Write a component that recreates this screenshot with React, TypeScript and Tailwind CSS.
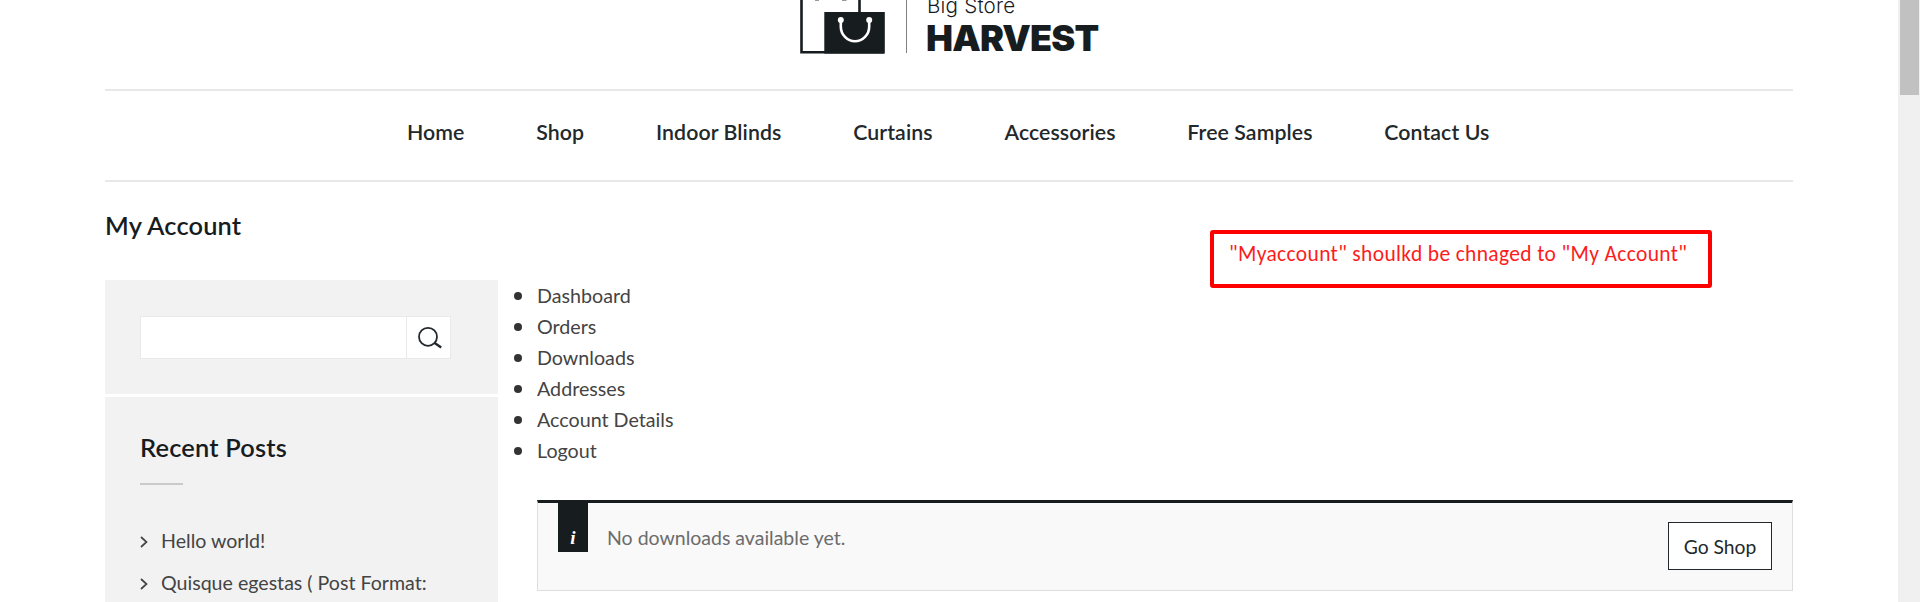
import React from "react";

const navItems = ["Home", "Shop", "Indoor Blinds", "Curtains", "Accessories", "Free Samples", "Contact Us"];
const accountLinks = ["Dashboard", "Orders", "Downloads", "Addresses", "Account Details", "Logout"];
const recentPosts = ["Hello world!", "Quisque egestas ( Post Format:"];

function BagLogo() {
  return (
    <svg width="86" height="54" viewBox="0 0 86 54" fill="none" className="shrink-0">
      <path d="M1.5 0V52.3H84" stroke="#171c1f" strokeWidth="2.6" />
      <path d="M59.5 0V13" stroke="#171c1f" strokeWidth="2.6" />
      <rect x="24.3" y="12" width="60.5" height="41.6" fill="#171c1f" />
      <path d="M15 0H19M42 0H46.5" stroke="#75787a" strokeWidth="1.6" />
      <path d="M40.8 20V26.5a14.2 14.8 0 0 0 28.4 0V20" stroke="#fff" strokeWidth="2.6" />
      <circle cx="40.8" cy="20" r="3" fill="#fff" />
      <circle cx="69.2" cy="20" r="3" fill="#fff" />
    </svg>
  );
}

function Header() {
  return (
    <header className="flex h-[89px] items-start pl-[695px]">
      <BagLogo />
      <div className="ml-[20px] h-[53px] w-px bg-[#7d8183]" />
      <div className="ml-[20px] flex h-[60px] flex-col justify-end text-[#171c1f]">
        <div className="font-['Inter',sans-serif] text-[20.6px] leading-6 font-light tracking-[0.2px]">Big Store</div>
        <div className="mb-[2px] -ml-px font-['Inter',sans-serif] text-[36px] leading-10 font-black tracking-[-0.85px]">
          HARVEST
        </div>
      </div>
    </header>
  );
}

function Sidebar() {
  return (
    <aside className="flex w-[393px] shrink-0 flex-col gap-[3px]">
      <section className="h-[114px] bg-[#f2f2f2] px-[35px] pt-9">
        <div className="flex h-[43px] w-[311px] border border-[#e9e9e9] bg-white">
          <div className="flex-1" />
          <div className="flex w-[44px] items-center justify-center border-l border-[#e9e9e9]">
            <svg width="26" height="24" viewBox="0 0 26 24" fill="none" stroke="#22282b" className="ml-[3px]">
              <circle cx="11" cy="10.8" r="9" strokeWidth="1.8" />
              <path d="M17.3 16.8L24.2 21.6" strokeWidth="2.4" />
            </svg>
          </div>
        </div>
      </section>
      <section className="h-[205px] bg-[#f2f2f2] px-[35px] pt-[34px]">
        <h2 className="text-[25.4px] leading-8 font-semibold tracking-[0.2px] text-[#171c1f]">Recent Posts</h2>
        <div className="mt-[20px] h-[2px] w-[43px] bg-[#cacaca]" />
        <ul className="mt-[35px] text-[19.6px] leading-[42.3px] text-[#444]">
          {recentPosts.map((post) => (
            <li key={post} className="flex items-center whitespace-nowrap">
              <svg width="8" height="12" viewBox="0 0 8 12" fill="none" stroke="#444" strokeWidth="1.7" className="mt-[2px] mr-[13px]">
                <path d="M1 1L6.5 6L1 11" />
              </svg>
              {post}
            </li>
          ))}
        </ul>
      </section>
    </aside>
  );
}

function Notice() {
  return (
    <div className="flex h-[91px] justify-between border border-t-[3px] border-[#dedede] border-t-[#171c1f] bg-[#f9f9f9]">
      <div className="flex pl-[20px]">
        <div className="flex h-[49px] w-[30px] items-end justify-center bg-[#171c1f] pb-[4px] font-['Liberation_Serif',serif] text-[19px] leading-5 font-bold text-white italic">
          i
        </div>
        <p className="ml-[19px] pt-[19px] text-[19.5px] leading-[31px] text-[#6c6c6c]">No downloads available yet.</p>
      </div>
      <button className="mt-[19px] mr-[20px] h-[48px] w-[104px] border-[1.5px] border-[#22282b] bg-white pt-px text-[19.3px] leading-none text-[#22282b]">
        Go Shop
      </button>
    </div>
  );
}

export default function App() {
  return (
    <div className="flex h-[602px] w-[1920px] overflow-hidden bg-white font-['Lato',sans-serif]">
      <div className="relative w-[1898px] pl-[105px]">
        <div className="w-[1688px]">
          <Header />
          <nav className="flex h-[93px] justify-start gap-[71.8px] border-y-2 border-[#e8e8e8] pt-[25px] pl-[302px] text-[21.3px] leading-8 font-semibold tracking-[0.08px] whitespace-nowrap text-[#22282b]">
            {navItems.map((item) => (
              <a key={item}>{item}</a>
            ))}
          </nav>
          <h1 className="pt-[27px] text-[25.4px] leading-8 font-semibold tracking-[0.15px] text-[#171c1f]">My Account</h1>
          <div className="mt-[39px] flex">
            <Sidebar />
            <main className="ml-[39px] flex-1">
              <ul className="text-[19.7px] leading-[31px] text-[#444]">
                {accountLinks.map((link) => (
                  <li key={link} className="-ml-[23px] flex items-center">
                    <span className="mt-px mr-[15px] h-[8px] w-[8px] rounded-full bg-[#333]" />
                    {link}
                  </li>
                ))}
              </ul>
              <div className="mt-[34px]">
                <Notice />
              </div>
            </main>
          </div>
        </div>
        <div className="absolute top-[230px] left-[1210px] h-[58px] w-[502px] rounded-[3px] border-4 border-[#fe0000] pt-[6px] pl-[15px] font-['Carlito','Lato',sans-serif] text-[21.5px] leading-[28px] tracking-[0.35px] whitespace-nowrap text-[#fd1c1c]">
          "Myaccount" shoulkd be chnaged to "My Account"
        </div>
      </div>
      <div className="w-[22px] bg-[#f0f0f0] pl-[2px]">
        <div className="h-[95px] w-[19px] bg-[#c1c1c1]" />
      </div>
    </div>
  );
}
